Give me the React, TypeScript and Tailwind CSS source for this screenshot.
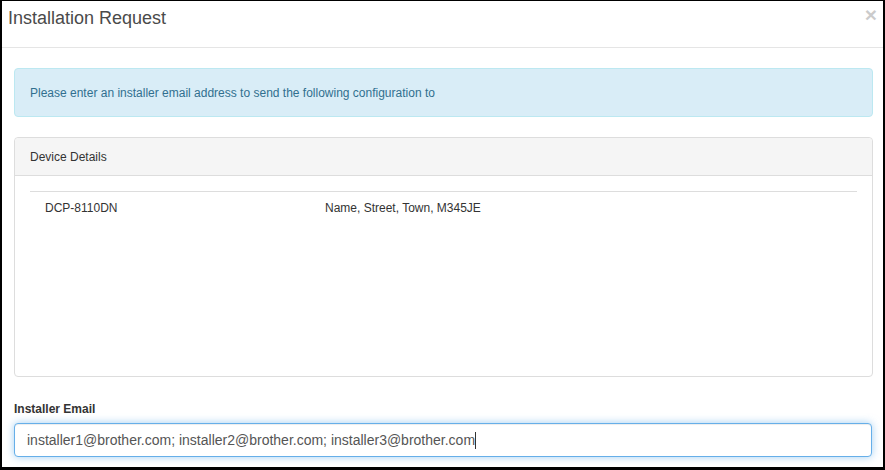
export default function App() {
  const devices = [{ model: 'DCP-8110DN', address: 'Name, Street, Town, M345JE' }];

  return (
    <div className="w-[885px] h-[470px] bg-white border-black border-t border-l-2 border-r-2 border-b-[3px] flex flex-col font-['Liberation_Sans',Arial,sans-serif] text-[#333]">
      {/* Header */}
      <div className="h-[47px] shrink-0 border-b border-[#e5e5e5] flex items-start justify-between pl-[6px] pr-[6px]">
        <h4 className="pt-[4px] text-[18px] leading-[26px] text-[#4a4a4a]">Installation Request</h4>
        <span className="mt-[3px] text-[21px] leading-none font-bold text-black opacity-20">×</span>
      </div>

      {/* Body */}
      <div className="flex flex-col pl-[12px] pr-[10px] pt-[20px]">
        <div className="h-[49px] flex items-center pl-[15px] border border-[#bce8f1] bg-[#d9edf7] rounded text-[12px] text-[#31708f]">
          Please enter an installer email address to send the following configuration to
        </div>

        <div className="mt-[20px] border border-[#ddd] rounded">
          <div className="h-[38px] flex items-center pl-[15px] bg-[#f5f5f5] border-b border-[#ddd] rounded-t text-[12px] text-[#333]">
            Device Details
          </div>
          <div className="h-[200px] p-[15px]">
            <div className="border-t border-[#ddd]">
              {devices.map((d) => (
                <div key={d.model} className="flex text-[12px] leading-[17px] py-[8px] text-[#333]">
                  <div className="w-[280px] pl-[15px]">{d.model}</div>
                  <div className="pl-[15px]">{d.address}</div>
                </div>
              ))}
            </div>
          </div>
        </div>

        <label className="mt-[24px] mb-[5px] text-[12px] leading-[17px] font-bold text-[#333]">Installer Email</label>
        <div className="h-[34px] flex items-center px-[12px] mr-px border border-[#66afe9] rounded bg-white text-[14px] text-[#555] shadow-[inset_0_1px_1px_rgba(0,0,0,0.075),0_0_8px_rgba(102,175,233,0.6)]">
          <span>installer1@brother.com; installer2@brother.com; installer3@brother.com</span>
          <span className="inline-block w-px h-[17px] bg-[#333]" />
        </div>
      </div>
    </div>
  );
}
